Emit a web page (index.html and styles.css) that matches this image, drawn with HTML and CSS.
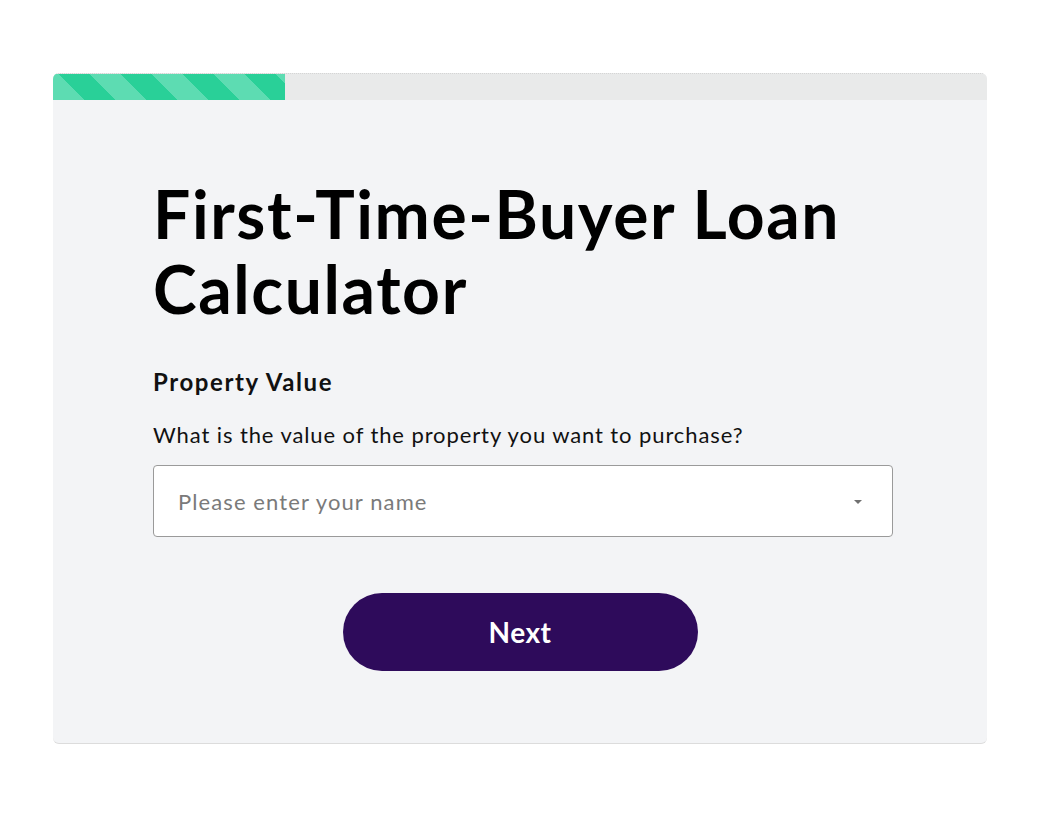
FILE: index.html
```html
<!DOCTYPE html>
<html>

<head>
	<title>First-Time-Buyer Loan Calculator</title>
	<link rel="stylesheet" href="styles.css">
</head>

<body>
	<div class="card">
		<div class="progress">
			<div class="progress-fill"></div>
		</div>
		<div class="card-body">
			<h1 class="title">First-Time-Buyer Loan Calculator</h1>
			<label class="field-label" for="value">Property Value</label>
			<p class="field-help">What is the value of the property you want to purchase?</p>
			<div class="select">
				<input id="value" type="text" placeholder="Please enter your name">
				<span class="caret"></span>
			</div>
			<div class="actions">
				<button class="next">Next</button>
			</div>
		</div>
	</div>
</body>

</html>
```

FILE: styles.css
```css
* {
	box-sizing: border-box;
}

body {
	margin: 0;
	padding: 73px 53px 0 53px;
	background: #ffffff;
	font-family: Lato, "Open Sans", sans-serif;
}

.card {
	width: 934px;
	height: 671px;
	background: #f3f4f6;
	border-radius: 6px;
	border-bottom: 1px solid #dcdcdc;
	overflow: hidden;
}

.progress {
	height: 27px;
	background: #e9eaea;
	border-top: 1px dotted #d5d5d5;
}

.progress-fill {
	width: 232px;
	height: 100%;
	background: repeating-linear-gradient(45deg, #5ddcb2 0, #5ddcb2 22px, #29d098 22px, #29d098 44px);
}

.card-body {
	padding: 76px 94px 0 100px;
}

.title {
	margin: 0;
	font-size: 66px;
	font-weight: 700;
	line-height: 75px;
	color: #000000;
	letter-spacing: 1.6px;
}

.field-label {
	display: block;
	margin-top: 41px;
	font-size: 24px;
	line-height: 30px;
	font-weight: 700;
	color: #111111;
	letter-spacing: 1.6px;
}

.field-help {
	margin: 24px 0 0 0;
	font-size: 22px;
	line-height: 28px;
	color: #111111;
	letter-spacing: 0.9px;
}

.select {
	position: relative;
	margin-top: 16px;
}

.select input {
	width: 100%;
	height: 72px;
	padding: 0 24px;
	border: 1px solid #9a9a9a;
	border-radius: 4px;
	background: #ffffff;
	font-family: inherit;
	font-size: 22px;
	letter-spacing: 1.1px;
	color: #222222;
	outline: none;
}

.select input::placeholder {
	color: #7a7a7a;
}

.caret {
	position: absolute;
	right: 31px;
	top: 35px;
	width: 0;
	height: 0;
	border-left: 4px solid transparent;
	border-right: 4px solid transparent;
	border-top: 4px solid #707070;
}

.actions {
	display: flex;
	justify-content: center;
	margin: 56px -94px 0 -100px;
}

.next {
	width: 355px;
	height: 78px;
	border: none;
	border-radius: 39px;
	background: #2e0b5b;
	color: #ffffff;
	font-family: inherit;
	font-size: 28px;
	font-weight: 700;
	letter-spacing: 0.5px;
}
```
